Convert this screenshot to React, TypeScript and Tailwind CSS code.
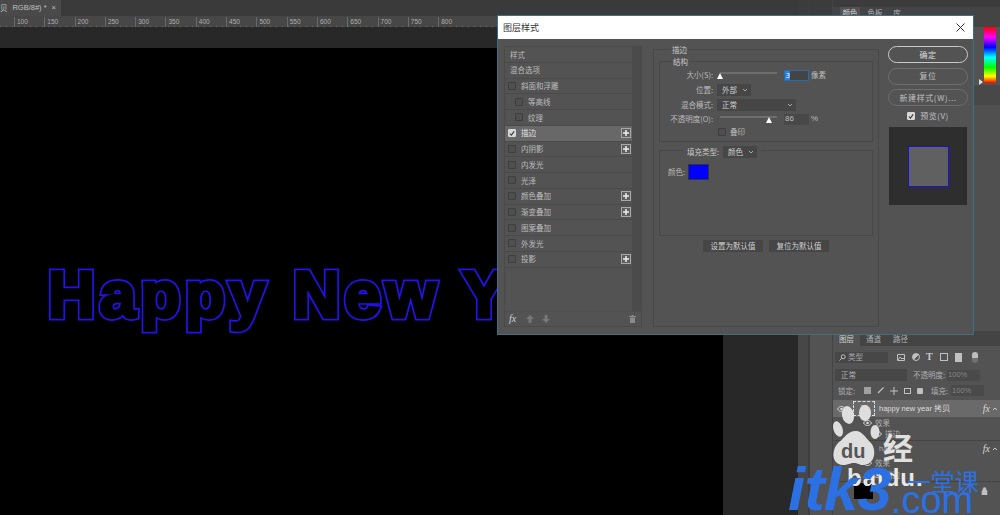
const cjk = "font-['Noto_Sans_CJK_SC','Liberation_Sans',sans-serif]"

const ticks = [100, 150, 200, 250, 300, 350, 400, 450, 500, 550, 600, 650, 700, 750, 800]

function Plus() {
  return (
    <span className="ml-auto mr-[1px] flex h-[10px] w-[10px] items-center justify-center border border-[#a8a8a8] bg-[#5f5f5f]">
      <svg width="6" height="6" viewBox="0 0 6 6">
        <path d="M3 0v6M0 3h6" stroke="#f0f0f0" strokeWidth="1.5" />
      </svg>
    </span>
  )
}

function Check({ checked = false }: { checked?: boolean }) {
  return (
    <span
      className={
        'flex h-[8px] w-[8px] shrink-0 items-center justify-center rounded-[1px] border ' +
        (checked ? 'border-[#d8d8d8] bg-[#d8d8d8]' : 'border-[#3e3e3e] bg-[#4f4f4f]')
      }
    >
      {checked && (
        <svg width="7" height="7" viewBox="0 0 7 7">
          <path d="M1 3.500l1.800 2L6 1" fill="none" stroke="#333" strokeWidth="1.3" />
        </svg>
      )}
    </span>
  )
}

function StyleRow({
  label,
  indent = false,
  plus = false,
  active = false,
  box = true,
}: {
  label: string
  indent?: boolean
  plus?: boolean
  active?: boolean
  box?: boolean
}) {
  return (
    <div
      className={
        'flex h-[14.75px] shrink-0 items-center gap-[5px] whitespace-nowrap ' +
        (indent ? 'pl-[10px] ' : box ? 'pl-[3px] ' : 'pl-[5px] ') +
        (active ? 'bg-[#686868] text-[#e4e4e4]' : 'bg-[#535353] text-[#bcbcbc]')
      }
    >
      {box && <Check checked={active} />}
      <span>{label}</span>
      {plus && <Plus />}
    </div>
  )
}

function Select({ label, width }: { label: string; width: string }) {
  return (
    <span className={'flex h-[12px] shrink-0 items-center justify-between whitespace-nowrap bg-[#464646] pl-[5px] pr-[3px] text-[#d0d0d0] ' + width}>
      {label}
      <svg width="6" height="4" viewBox="0 0 6 4">
        <path d="M1 1l2 2 2-2" fill="none" stroke="#a8a8a8" />
      </svg>
    </span>
  )
}

function Slider({ pos }: { pos: string }) {
  return (
    <span className="relative ml-[7px] mt-[4px] block h-[2px] w-[57px] shrink-0 self-start bg-[#6e6e6e]">
      <span
        className={
          'absolute top-[1px] h-0 w-0 border-x-[3.5px] border-b-[6px] border-x-transparent border-b-white ' + pos
        }
      />
    </span>
  )
}

function Button({ label, primary = false }: { label: string; primary?: boolean }) {
  return (
    <div
      className={
        'flex h-[17px] w-[80px] items-center justify-center whitespace-nowrap rounded-full border text-[8px] tracking-[0.6px] ' +
        (primary ? 'border-[#c8c8c8] text-[#dedede]' : 'border-[#6e6e6e] text-[#c0c0c0]')
      }
    >
      {label}
    </div>
  )
}

function Dialog() {
  return (
    <div className={'absolute left-[497px] top-[15px] flex h-[320px] w-[477px] flex-col border border-[#3f6f86] bg-[#535353] text-[7.5px] leading-none ' + cjk}>
      <div className="flex h-[23px] shrink-0 items-center justify-between bg-white pl-[5px] pr-[8px] text-[9px] text-[#333]">
        <span>图层样式</span>
        <svg width="9" height="9" viewBox="0 0 9 9">
          <path d="M.5.5l8 8M8.500.5l-8 8" stroke="#333" strokeWidth="1" />
        </svg>
      </div>
      <div className="flex min-h-0 flex-1 pb-[7px] pl-[6px] pt-[7px]">
        {/* style list */}
        <div className="flex w-[138px] shrink-0 flex-col border border-[#4a4a4a]">
          <div className="flex min-h-0 flex-1">
            <div className="flex w-[127px] flex-col gap-[1px] bg-[#4a4a4a]">
              <StyleRow label="样式" box={false} />
              <StyleRow label="混合选项" box={false} />
              <StyleRow label="斜面和浮雕" />
              <StyleRow label="等高线" indent />
              <StyleRow label="纹理" indent />
              <StyleRow label="描边" plus active />
              <StyleRow label="内阴影" plus />
              <StyleRow label="内发光" />
              <StyleRow label="光泽" />
              <StyleRow label="颜色叠加" plus />
              <StyleRow label="渐变叠加" plus />
              <StyleRow label="图案叠加" />
              <StyleRow label="外发光" />
              <StyleRow label="投影" plus />
              <div className="flex-1 bg-[#535353]" />
            </div>
            <div className="flex-1 bg-[#4b4b4b]" />
          </div>
          <div className="flex h-[15px] shrink-0 items-center gap-[8px] border-t border-[#4f4f4f] pl-[4px] pr-[5px]">
            <span className="mr-[2px] font-['Liberation_Serif',serif] text-[10px] italic text-[#d0d0d0]">fx</span>
            <svg width="8" height="8" viewBox="0 0 8 8">
              <path d="M4 0L8 4H5.500V8h-3V4H0z" fill="#777" />
            </svg>
            <svg width="8" height="8" viewBox="0 0 8 8">
              <path d="M4 8L8 4H5.500V0h-3v4H0z" fill="#777" />
            </svg>
            <svg className="ml-auto" width="7" height="8" viewBox="0 0 7 8">
              <path d="M0 1h7v1H0zM2.500 0h2v1h-2zM1 2.500h5V8H1z" fill="#8a8a8a" />
            </svg>
          </div>
        </div>

        {/* stroke settings */}
        <div className="ml-[11px] mt-[3px] flex w-[226px] shrink-0 flex-col border border-[#484848] px-[5px]">
          <span className="-mt-[5px] ml-[12px] flex h-[10px] w-fit items-center bg-[#535353] px-[1px] text-[#c8c8c8]">描边</span>
          <div className="mt-[6px] flex h-[81px] flex-col border border-[#484848]">
            <span className="-mt-[5px] ml-[12px] flex h-[10px] w-fit items-center bg-[#535353] px-[1px] text-[#c8c8c8]">结构</span>
            <div className="mt-[1px] flex h-[14px] items-center">
              <span className="w-[53px] shrink-0 text-right text-[#bcbcbc]">大小(S):</span>
              <Slider pos="-left-[3px]" />
              <span className="ml-[7px] flex h-[11px] w-[25px] shrink-0 items-center border border-[#2b6aa8] bg-[#444]">
                <span className="block w-[5px] bg-[#2f7fe0] pl-[1px] text-[7px] leading-[9px] text-white">3</span>
              </span>
              <span className="ml-[2px] whitespace-nowrap text-[#bcbcbc]">像素</span>
            </div>
            <div className="mt-[1px] flex h-[14px] items-center">
              <span className="w-[53px] shrink-0 text-right text-[#bcbcbc]">位置:</span>
              <Select label="外部" width="ml-[4px] w-[34px]" />
            </div>
            <div className="mt-[1px] flex h-[14px] items-center">
              <span className="w-[53px] shrink-0 text-right text-[#bcbcbc]">混合模式:</span>
              <Select label="正常" width="ml-[4px] w-[79px]" />
            </div>
            <div className="flex h-[14px] items-center">
              <span className="w-[53px] shrink-0 whitespace-nowrap text-right text-[#bcbcbc]">不透明度(O):</span>
              <Slider pos="left-[46px]" />
              <span className="ml-[7px] flex h-[11px] w-[25px] shrink-0 items-center bg-[#484848] pl-[1px] font-['Liberation_Sans',sans-serif] text-[8px] text-[#bcbcbc]">86</span>
              <span className="ml-[2px] font-['Liberation_Sans',sans-serif] text-[8px] text-[#bcbcbc]">%</span>
            </div>
            <div className="-mt-[1px] flex h-[13px] items-center pl-[58px] text-[#bcbcbc]">
              <Check />
              <span className="ml-[4px] whitespace-nowrap">叠印</span>
            </div>
          </div>

          <div className="mt-[8px] flex h-[86px] flex-col border border-[#484848]">
            <div className="-mt-[5px] ml-[23px] flex h-[12px] w-fit items-center gap-[4px] bg-[#535353] px-[4px] text-[#c8c8c8]">
              <span className="whitespace-nowrap">填充类型:</span>
              <Select label="颜色" width="w-[34px]" />
            </div>
            <div className="mt-[6px] flex items-center gap-[3px] pl-[8px] text-[#b8b8b8]">
              <span className="whitespace-nowrap">颜色:</span>
              <span className="h-[16px] w-[21px] border border-[#333] bg-[#0000ff]" />
            </div>
          </div>

          <div className="mt-[4px] flex justify-center gap-[6px] text-[#d0d0d0]">
            <span className="flex h-[12px] w-[60px] items-center justify-center whitespace-nowrap bg-[#464646]">设置为默认值</span>
            <span className="flex h-[12px] w-[60px] items-center justify-center whitespace-nowrap bg-[#464646]">复位为默认值</span>
          </div>
        </div>

        {/* right buttons */}
        <div className="ml-[9px] flex w-[80px] shrink-0 flex-col gap-[4.500px]">
          <Button label="确定" primary />
          <Button label="复位" />
          <Button label="新建样式(W)..." />
          <div className="-mt-[1px] flex h-[13px] items-center justify-center gap-[5px] text-[8px] tracking-[0.5px] text-[#c0c0c0]">
            <Check checked />
            预览(V)
          </div>
          <div className="flex h-[78px] w-[78px] items-center justify-center self-center bg-[#2e2e2e]">
            <div className="h-[41px] w-[41px] border-[1.5px] border-[#1a0fe0] bg-[#606060]" />
          </div>
        </div>
      </div>
    </div>
  )
}

function Eye({ className = '' }: { className?: string }) {
  return (
    <svg className={className} width="9" height="6" viewBox="0 0 9 6">
      <path d="M.5 3C2 .8 3.200.5 4.500.5S7 .8 8.500 3C7 5.200 5.800 5.500 4.500 5.500S2 5.200.5 3z" fill="none" stroke="#d8d8d8" />
      <circle cx="4.500" cy="3" r="1.300" fill="#d8d8d8" />
    </svg>
  )
}

function Fx() {
  return <span className="ml-auto font-['Liberation_Serif',serif] text-[10px] italic text-[#d8d8d8]">fx</span>
}

function Chevron() {
  return (
    <svg className="ml-[2px]" width="6" height="4" viewBox="0 0 6 4">
      <path d="M1 3l2-2 2 2" fill="none" stroke="#c8c8c8" />
    </svg>
  )
}

function LayersPanel() {
  return (
    <div className={'flex h-[184px] shrink-0 flex-col bg-[#535353] text-[7.5px] leading-none text-[#b0b0b0] ' + cjk}>
      <div className="flex h-[15px] shrink-0 items-end bg-[#444]">
        <span className="flex h-[15px] w-[27px] items-center justify-center bg-[#535353] text-[#d0d0d0]">图层</span>
        <span className="flex h-[15px] w-[27px] items-center justify-center">通道</span>
        <span className="flex h-[15px] w-[27px] items-center justify-center">路径</span>
      </div>
      <div className="flex h-[22px] shrink-0 items-center pl-[2px]">
        <span className="flex h-[11px] w-[53px] items-center gap-[2px] bg-[#474747] pl-[4px] text-[#a8a8a8]">
          <svg width="7" height="7" viewBox="0 0 7 7">
            <circle cx="4.200" cy="2.800" r="2" fill="none" stroke="#c0c0c0" />
            <path d="M2.800 4.200L.5 6.500" stroke="#c0c0c0" />
          </svg>
          类型
        </span>
        <svg className="ml-[9px]" width="8" height="7" viewBox="0 0 8 7">
          <path d="M.5.5h7v6h-7zM1 6l2-3 2 2 1-1 2 2" fill="none" stroke="#c0c0c0" />
        </svg>
        <span className="ml-[7px] h-[8px] w-[8px] rounded-full border border-[#c0c0c0] bg-[linear-gradient(135deg,#c0c0c0_50%,transparent_50%)]" />
        <span className="ml-[6px] font-['Liberation_Serif',serif] text-[10px] font-bold text-[#c8c8c8]">T</span>
        <span className="ml-[7px] h-[8px] w-[8px] border border-[#c0c0c0]" />
        <span className="ml-[7px] h-[9px] w-[7px] bg-[#c0c0c0]" />
        <span className="ml-[10px] h-[11px] w-[6px] rounded-full bg-[linear-gradient(to_bottom,#bdbdbd_55%,#707070_55%)]" />
      </div>
      <div className="flex h-[14px] shrink-0 items-center pl-[2px]">
        <span className="flex h-[12px] w-[72px] items-center bg-[#474747] pl-[6px]">正常</span>
        <span className="ml-[6px] whitespace-nowrap">不透明度:</span>
        <span className="ml-[2px] flex h-[11px] w-[33px] items-center bg-[#4a4a4a] pl-[1px] font-['Liberation_Sans',sans-serif] text-[#858585]">100%</span>
      </div>
      <div className="flex h-[17px] shrink-0 items-center pl-[5px]">
        <span className="w-[24px] whitespace-nowrap">锁定:</span>
        <span className="ml-[2px] h-[7px] w-[7px] bg-[#a0a0a0]" />
        <svg className="ml-[6px]" width="7" height="7" viewBox="0 0 7 7">
          <path d="M6.500.5L1 6" stroke="#c0c0c0" strokeWidth="1.300" />
        </svg>
        <svg className="ml-[6px]" width="8" height="8" viewBox="0 0 8 8">
          <path d="M4 0v8M0 4h8" stroke="#c0c0c0" />
        </svg>
        <span className="ml-[6px] h-[6px] w-[7px] border border-[#c0c0c0]" />
        <span className="ml-[6px] h-[6px] w-[6px] rounded-[1px] bg-[#c0c0c0]" />
        <span className="ml-[8px] whitespace-nowrap">填充:</span>
        <span className="ml-[3px] flex h-[11px] w-[33px] items-center bg-[#4a4a4a] pl-[1px] font-['Liberation_Sans',sans-serif] text-[#858585]">100%</span>
      </div>
      <div className="mt-[1px] flex h-[17px] shrink-0 items-center bg-[#6a6a6a] pl-[4px] pr-[2px] text-[#dcdcdc]">
        <Eye />
        <span className="relative ml-[7px] flex h-[15px] w-[22px] items-center justify-center border border-dashed border-[#ddd] font-['Liberation_Serif',serif] text-[10px]">T</span>
        <span className="ml-[4px] whitespace-nowrap font-['Liberation_Sans',sans-serif]">happy new year 拷贝</span>
        <Fx />
        <Chevron />
      </div>
      <div className="flex h-[11px] shrink-0 items-center gap-[3px] pl-[30px]">
        <Eye />
        效果
      </div>
      <div className="flex h-[13px] shrink-0 items-center gap-[3px] border-b border-[#444] pl-[40px]">
        <Eye />
        描边
      </div>
      <div className="flex h-[16px] shrink-0 items-center pl-[4px] pr-[2px] font-['Liberation_Sans',sans-serif]">
        <Eye />
        <span className="ml-[33px]">happy</span>
        <Fx />
        <Chevron />
      </div>
      <div className="flex h-[12px] shrink-0 items-center gap-[3px] pl-[30px]">
        <Eye />
        效果
      </div>
      <div className="flex h-[13px] shrink-0 items-center gap-[3px] border-b border-[#444] pl-[40px]">
        <Eye />
        描边
      </div>
      <div className="flex flex-1 items-start pl-[21px] pr-[12px] pt-[1px]">
        <span className="h-[16px] w-[19px] bg-black" />
        <svg className="ml-auto mt-[4px]" width="7" height="8" viewBox="0 0 7 8">
          <path d="M1 3.500h5V8H1zM2 3.500V2a1.500 1.500 0 013 0v1.500" fill="#c0c0c0" stroke="#c0c0c0" strokeWidth=".6" />
        </svg>
      </div>
    </div>
  )
}

function Watermarks() {
  return (
    <>
      <div className="absolute left-[832px] top-[404px] font-['Liberation_Sans',sans-serif] text-[#e0e0e0]">
        <svg width="48" height="62" viewBox="0 0 48 62">
          <ellipse cx="6" cy="25" rx="4.500" ry="8" fill="#dedede" transform="rotate(-18 6 25)" />
          <ellipse cx="16" cy="11" rx="6" ry="9" fill="#dedede" transform="rotate(-12 16 11)" />
          <ellipse cx="33" cy="9" rx="6" ry="8" fill="#dedede" />
          <ellipse cx="43" cy="28" rx="4.500" ry="7" fill="#dedede" />
          <path d="M24 27c6 0 9 6 14 11 7 6 6 23-7 23-4 0-5-2-9-2s-6 2-11 2C-1 61-1 45 7 38c6-4 8-11 17-11z" fill="#dedede" />
          <text x="9" y="54" fontFamily="Liberation Sans" fontWeight="700" fontSize="20" fill="#555">du</text>
        </svg>
        <span className={'absolute left-[51px] top-[27px] text-[30px] font-bold leading-none ' + cjk}>经</span>
      </div>
      <span className="absolute left-[847px] top-[466px] font-['Liberation_Sans',sans-serif] text-[24px] font-bold leading-none tracking-[1px] text-[#e8e8e8]">
        baidu.
      </span>
      <div className="absolute left-[788px] top-[463px] flex h-[52px] items-start whitespace-nowrap font-['Liberation_Sans',sans-serif] text-[#2b71e3]">
        <span className="text-[62px] font-bold italic leading-[52px] tracking-[-1px]">itk3</span>
        <div className="flex flex-col">
          <span className={'ml-[16px] mt-[5px] text-[24px] leading-[26px] ' + cjk}>一堂课</span>
          <span className="-mt-[4px] text-[38px] leading-[20px]">.com</span>
        </div>
      </div>
    </>
  )
}

export default function App() {
  return (
    <div className="relative h-[515px] w-[1000px] overflow-hidden bg-[#535353]">
      <div className="flex h-full">
        {/* document area */}
        <div className="flex w-[798px] shrink-0 flex-col">
          <div className="flex h-[16px] shrink-0 bg-[#3a3a3a]">
            <div className="flex w-[61px] items-center justify-end gap-[5px] whitespace-nowrap bg-[#4a4a4a] pr-[5px] font-['Liberation_Sans',sans-serif] text-[7.5px] text-[#c0c0c0]">
              <span className={cjk}>贝</span>
              <span>RGB/8#) *</span>
              <span>×</span>
            </div>
          </div>
          <div className="flex h-[11px] shrink-0 items-end bg-[#474747] bg-[repeating-linear-gradient(to_right,#6e6e6e_0,#6e6e6e_1px,transparent_1px,transparent_6px)] bg-[length:100%_1px] bg-bottom bg-no-repeat pl-[14px] font-['Liberation_Sans',sans-serif] text-[6.5px] text-[#b0b0b0]">
            {ticks.map((t) => (
              <span key={t} className="w-[30.3px] shrink-0 border-l border-[#6a6a6a] pl-[2px] leading-[10px]">
                {t}
              </span>
            ))}
          </div>
          <div className="flex min-h-0 flex-1">
            <div className="flex w-[723px] shrink-0 flex-col">
              <div className="h-[21px] shrink-0 bg-[#282828]" />
              <div className="flex-1 overflow-hidden bg-black pl-[48px] pt-[207px]">
                <p
                  data-text="Happy New Year"
                  className="relative w-fit whitespace-nowrap font-['Liberation_Sans',sans-serif] text-[65px] font-bold leading-[80px] tracking-[4.7px] text-black [-webkit-text-stroke:6.8px_#2412ee] before:absolute before:left-0 before:top-0 before:content-[attr(data-text)] before:[-webkit-text-stroke:3.4px_#000]"
                >
                  Happy New Year
                </p>
              </div>
            </div>
            <div className="flex-1 bg-[#282828]" />
          </div>
        </div>
        {/* side panels */}
        <div className="w-[10px] shrink-0 bg-[linear-gradient(to_bottom,#3c3c3c_15px,#474747_15px)]" />
        <div className="w-[2px] shrink-0 bg-[#3e3e3e]" />
        <div className="w-[22px] shrink-0 bg-[linear-gradient(to_bottom,#3c3c3c_15px,#535353_15px)]" />
        <div className="w-px shrink-0 bg-[#444]" />
        <div className="flex min-w-0 flex-1 flex-col">
          <div className="h-[7px] shrink-0 bg-[#3c3c3c]" />
          <div className={'flex h-[20px] shrink-0 items-start bg-[#444] pl-[7px] text-[7.5px] leading-none text-[#b0b0b0] ' + cjk}>
            <span className="flex h-[12px] w-[20px] items-center justify-center bg-[#535353] text-[#d0d0d0]">颜色</span>
            <span className="ml-[5px] flex h-[12px] w-[20px] items-center justify-center">色板</span>
            <span className="ml-[5px] flex h-[12px] w-[14px] items-center justify-center">库</span>
          </div>
          <div className="relative h-[58px] shrink-0 bg-[#535353] pl-[151px]">
            <div className="h-[56px] w-[12px] bg-[linear-gradient(to_bottom,#ff0000_0%,#ff00ff_18%,#0000ff_36%,#00ffff_54%,#00ff00_72%,#ffff00_88%,#ff0000_100%)]" />
            <span className="absolute left-[146px] top-[52px] h-0 w-0 border-y-[3px] border-l-[4px] border-y-transparent border-l-[#e0e0e0]" />
          </div>
          <div className="h-[20px] shrink-0 bg-[#484848]" />
          <div className="min-h-0 flex-1 bg-[#505050]" />
          <LayersPanel />
        </div>
      </div>
      <Dialog />
      <Watermarks />
    </div>
  )
}
